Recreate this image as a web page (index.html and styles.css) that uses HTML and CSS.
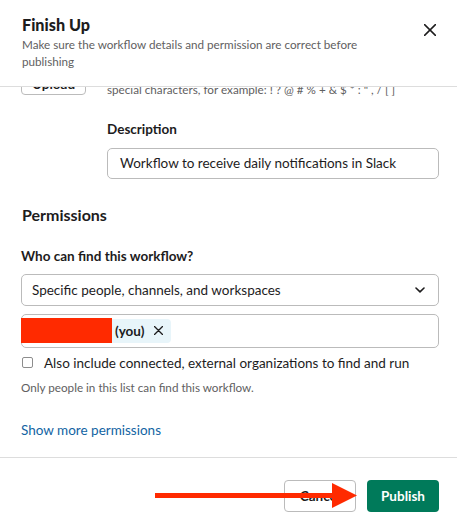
FILE: index.html
```html
<!DOCTYPE html>
<html lang="en">
<head>
<meta charset="utf-8">
<title>Finish Up</title>
<link rel="stylesheet" href="styles.css">
</head>
<body>
<div class="modal">
  <header class="head">
    <div class="titles">
      <h1 class="title">Finish Up</h1>
      <p class="subtitle">Make sure the workflow details and permission are correct before publishing</p>
    </div>
    <button class="close" aria-label="Close">
      <svg width="12" height="12" viewBox="0 0 12 12"><path d="M0.6 0.6 L11.4 11.4 M11.4 0.6 L0.6 11.4" stroke="#1d1c1d" stroke-width="1.5" stroke-linecap="round"/></svg>
    </button>
  </header>
  <main class="body">
    <div class="content">
      <div class="icon-row">
        <button class="upload">Upload</button>
        <div class="icon-col">
          <p class="help">Name can only contain letters, numbers, spaces and<br>special characters, for example: ! ? @ # % + &amp; $ * : " , / [ ]</p>
          <div class="label">Description</div>
          <div class="input">Workflow to receive daily notifications in Slack</div>
        </div>
      </div>
      <h2 class="section">Permissions</h2>
      <div class="label2">Who can find this workflow?</div>
      <div class="select">
        <span>Specific people, channels, and workspaces</span>
        <svg class="chev" width="10" height="6" viewBox="0 0 10 6"><path d="M1 1 L5 4.8 L9 1" fill="none" stroke="#1d1c1d" stroke-width="1.6" stroke-linecap="round" stroke-linejoin="round"/></svg>
      </div>
      <div class="multi">
        <span class="chip"><span class="redact"></span><span class="you">(you)</span><svg class="chip-x" width="9" height="9" viewBox="0 0 9 9"><path d="M0.5 0.5 L8.5 8.5 M8.5 0.5 L0.5 8.5" stroke="#1d1c1d" stroke-width="1.3" stroke-linecap="round"/></svg></span>
      </div>
      <label class="check-row"><span class="box"></span><span>Also include connected, external organizations to find and run</span></label>
      <p class="note">Only people in this list can find this workflow.</p>
      <a class="more">Show more permissions</a>
    </div>
  </main>
  <footer class="foot">
    <button class="btn cancel">Cancel</button>
    <button class="btn publish">Publish</button>
    <svg class="arrow" width="210" height="30" viewBox="0 0 210 30"><rect x="0" y="10" width="182" height="5" fill="#ff2a00"/><polygon points="177,0 202,12.5 177,25" fill="#ff2a00"/></svg>
  </footer>
</div>
</body>
</html>
```

FILE: styles.css
```css
* { box-sizing: border-box; }
html, body { margin: 0; padding: 0; background: #fff; }
body {
  font-family: Lato, "Noto Sans", "Liberation Sans", sans-serif;
  color: #1d1c1d;
}
.modal { width: 457px; height: 531px; display: flex; flex-direction: column; }

.head {
  display: flex;
  justify-content: space-between;
  align-items: flex-start;
  gap: 16px;
  padding: 14px 21px 0 22px;
  height: 87px;
  border-bottom: 1px solid #dddddd;
}
.title { margin: 0; font-size: 16.2px; line-height: 22px; font-weight: 900; }
.subtitle { margin: 0; font-size: 11.7px; line-height: 16.5px; color: #616061; max-width: 385px; }
.close { border: 0; padding: 0; background: none; width: 12px; height: 12px; margin-top: 10px; display: block; }
.close svg { display: block; }

.body { height: 370px; overflow: hidden; padding: 0 18px 0 21px; }
.content { margin-top: -24px; }

.icon-row { display: flex; gap: 21px; }
.upload {
  flex: none;
  width: 65px; height: 32px;
  border: 1px solid #bbbbbb; border-radius: 4px; background: #fff;
  padding: 10px 0 0;
  font: 700 13.5px/18px Lato, sans-serif; color: #1d1c1d;
}
.icon-col { flex: 1; }
.help { margin: 1px 0 0; font-size: 11.7px; line-height: 17px; color: #616061; }
.label { margin-top: 22px; font-size: 13.5px; line-height: 18px; font-weight: 700; }
.input {
  margin-top: 9.5px;
  height: 31px;
  border: 1px solid #bbbbbb; border-radius: 5px;
  padding: 0 12px;
  font-size: 13.5px; line-height: 29px;
}

.section { margin: 25px 0 0 1px; font-size: 16px; line-height: 22px; font-weight: 700; }
.label2 { margin-top: 21px; font-size: 13.5px; line-height: 18px; font-weight: 700; }
.select {
  margin-top: 9px; height: 32px;
  border: 1px solid #bbbbbb; border-radius: 5px;
  display: flex; align-items: center; justify-content: space-between;
  padding: 0 13px 0 10px;
  font-size: 13.5px;
}
.chev { display: block; margin-top: 1px; }
.multi {
  margin-top: 8px; height: 34px;
  border: 1px solid #bbbbbb; border-radius: 5px;
  padding: 4px 3px;
  display: flex; align-items: flex-start;
}
.chip {
  display: flex; align-items: center;
  height: 24px;
  background: #e8f5fa; border-radius: 4px;
  padding-right: 8px;
  font-size: 13.5px; font-weight: 700;
}
.redact { width: 91px; height: 25px; background: #ff2a00; margin: -1px 0 0 -4px; flex: none; }
.you { margin-left: 3px; }
.chip-x { display: block; margin-left: 9px; }

.check-row { display: flex; align-items: center; margin-top: 6px; height: 18px; font-size: 13.5px; line-height: 18px; }
.box { width: 11px; height: 11px; border: 1px solid #8d8d8d; border-radius: 2px; margin-left: 1px; margin-right: 11px; flex: none; }
.note { margin: 7.5px 0 0; font-size: 11.7px; line-height: 16px; color: #616061; }
.more { display: block; margin-top: 26px; font-size: 13.5px; line-height: 18px; color: #1264a3; }

.foot {
  position: relative;
  border-top: 1px solid #dddddd;
  display: flex; justify-content: flex-end; gap: 11px;
  padding: 22px 18px 0 0;
  flex: 1;
}
.btn {
  width: 72px; height: 32px; border-radius: 4px;
  font: 700 13.5px Lato, sans-serif;
}
.cancel { background: #fff; border: 1px solid #bbbbbb; color: #1d1c1d; }
.publish { background: #007a5a; border: 0; color: #fff; }
.arrow { position: absolute; left: 155px; top: 25px; }
```
